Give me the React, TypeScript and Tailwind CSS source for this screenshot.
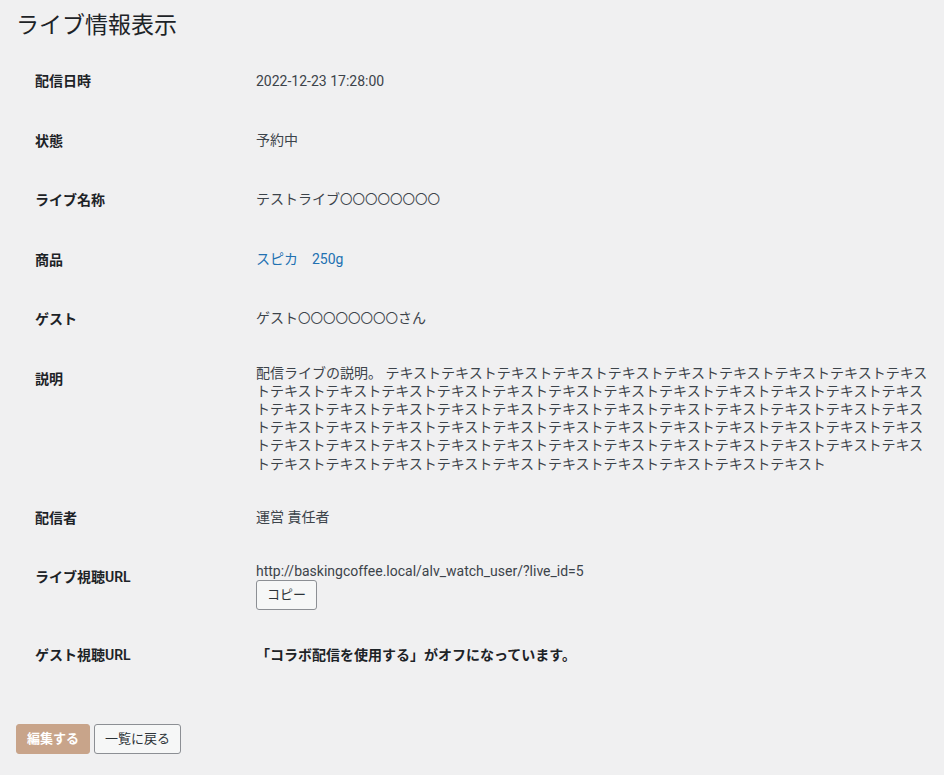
import React from 'react';

const TEXT = 'テキスト'.repeat(68);

interface RowProps {
  label: string;
  children: React.ReactNode;
}

const Row: React.FC<RowProps> = ({ label, children }) => (
  <div className="flex">
    <div className="w-[221px] shrink-0 pt-[21px] pb-[19px] text-[14px] leading-[19.5px] font-semibold text-[#1d2327]">
      {label}
    </div>
    <div className="self-center py-[15px] text-[14px] leading-[18.2px] text-[#3c434a]">{children}</div>
  </div>
);

// the circles in the reference are a touch narrower than a full em
const Circles: React.FC = () => <span className="text-[12.5px]">〇〇〇〇〇〇〇〇</span>;

const App: React.FC = () => {
  return (
    <div className="min-h-screen bg-[#f0f0f1] pl-4 pt-[11px] font-['Roboto','Noto_Sans_CJK_JP',sans-serif] text-[#3c434a]">
      <h1 className="text-[23px] leading-[30px] font-normal text-[#1d2327]">ライブ情報表示</h1>

      <div className="mt-[10px] pl-[19px]">
        <Row label="配信日時">2022-12-23 17:28:00</Row>
        <Row label="状態">予約中</Row>
        <Row label="ライブ名称">
          テストライブ
          <Circles />
        </Row>
        <Row label="商品">
          <a href="#" className="text-[#2271b1]">
            スピカ　250g
          </a>
        </Row>
        <Row label="ゲスト">
          ゲスト
          <Circles />
          さん
        </Row>
        <Row label="説明">
          <div className="w-[680px]">配信ライブの説明。 {TEXT}</div>
        </Row>
        <Row label="配信者">運営 責任者</Row>
        <Row label="ライブ視聴URL">
          <div>http://baskingcoffee.local/alv_watch_user/?live_id=5</div>
          <button className="flex h-[30px] items-center rounded-[3px] border border-[#8c8f94] bg-[#f6f7f7] px-[10px] text-[13px] text-[#2c3338]">
            コピー
          </button>
        </Row>
        <Row label="ゲスト視聴URL">
          <span className="font-semibold text-[#1d2327]">「コラボ配信を使用する」がオフになっています。</span>
        </Row>
      </div>

      <div className="mt-[39px] flex gap-1">
        <button className="flex h-[30px] items-center rounded-[3px] border border-[#c8a48a] bg-[#c8a48a] px-[10px] text-[13px] font-semibold text-white">
          編集する
        </button>
        <button className="flex h-[30px] items-center rounded-[3px] border border-[#8c8f94] bg-[#f6f7f7] px-[10px] text-[13px] text-[#2c3338]">
          一覧に戻る
        </button>
      </div>
    </div>
  );
};

export default App;
